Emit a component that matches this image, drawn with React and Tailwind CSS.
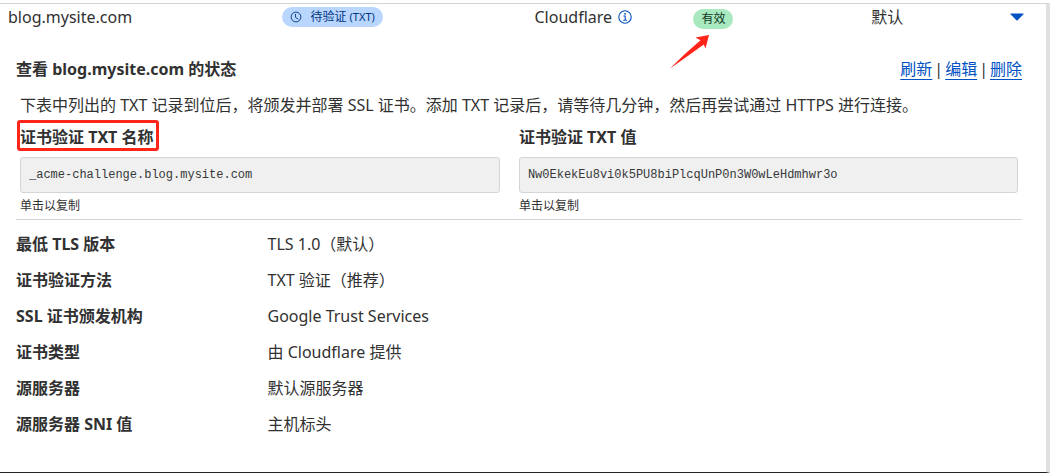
import { useState } from "react";

const details = [
  ["最低 TLS 版本", "TLS 1.0（默认）"],
  ["证书验证方法", "TXT 验证（推荐）"],
  ["SSL 证书颁发机构", "Google Trust Services"],
  ["证书类型", "由 Cloudflare 提供"],
  ["源服务器", "默认源服务器"],
  ["源服务器 SNI 值", "主机标头"],
];

function ClockIcon() {
  return (
    <svg className="size-3" viewBox="0 0 12 12" fill="none" stroke="currentColor" aria-hidden="true">
      <circle cx="6" cy="6" r="4.9" strokeWidth="0.9" />
      <path d="M5.5 3v3.3L8.3 8.2" strokeWidth="0.9" />
    </svg>
  );
}

function InfoIcon() {
  return (
    <svg className="size-[14px]" viewBox="0 0 14 14" fill="none" stroke="currentColor" aria-hidden="true">
      <circle cx="7" cy="7" r="6.2" strokeWidth="1.1" />
      <path d="M5.5 6h1.7v4.2M5.2 10.3h3.8" strokeWidth="1.1" />
      <circle cx="7" cy="3.8" r="0.9" fill="currentColor" stroke="none" />
    </svg>
  );
}

function Arrow() {
  return (
    <svg className="absolute top-[25px] right-[23px] h-9 w-10" viewBox="0 0 40 36" aria-hidden="true">
      <path d="M39 1 25.5 3.5 30.5 6.2 Q14 20 0 34.5 Q18 22 33.8 10.5 L35.5 14.5Z" fill="#ff2519" />
    </svg>
  );
}

function CopyField({ id, label, value, marked }) {
  return (
    <div className="min-w-0">
      <div className="flex h-9 items-center">
        <label htmlFor={id} className="relative font-bold">
          {label}
          {marked && (
            <span className="absolute -top-[5px] -right-[5px] -bottom-[2px] -left-[3px] rounded-[3px] border-[3px] border-[#ff2519]" />
          )}
        </label>
      </div>
      <input
        id={id}
        readOnly
        value={value}
        className="mt-[2px] block h-9 w-full rounded-[3px] border border-[#d5d5d5] bg-[#f0f0f0] px-2 font-['Liberation_Mono',monospace] text-xs text-[#36393a] outline-none"
      />
      <button
        type="button"
        onClick={() => navigator.clipboard?.writeText(value)}
        className="mt-[5px] block text-xs leading-4"
      >
        单击以复制
      </button>
    </div>
  );
}

export default function App() {
  const [open, setOpen] = useState(true);
  return (
    <div className="flex min-h-screen flex-col bg-white pt-[3px] font-['Noto_Sans','Noto_Sans_CJK_SC',sans-serif] text-base leading-6 text-[#313131]">
      <main className="grow border-t border-r-4 border-b border-t-[#d5d5d5] border-r-[#e0e0e0] border-b-[#222]">
        <table className="w-full table-fixed">
          <colgroup>
            <col className="w-[27%]" />
            <col className="w-[24.1%]" />
            <col className="w-[15.2%]" />
            <col className="w-[17%]" />
            <col />
          </colgroup>
          <tbody>
            <tr className="h-[26px]">
              <td className="pl-2">blog.mysite.com</td>
              <td>
                <span className="flex h-5 w-fit items-center gap-2 rounded-full bg-[#b9d6ff] px-2 text-xs text-[#003681]">
                  <ClockIcon />
                  <span className="whitespace-nowrap">
                    待验证 <span className="text-[11px]">(TXT)</span>
                  </span>
                </span>
              </td>
              <td>
                <span className="flex items-center gap-[6px]">
                  Cloudflare
                  <button type="button" aria-label="Cloudflare" className="text-[#0051c3]">
                    <InfoIcon />
                  </button>
                </span>
              </td>
              <td>
                <span className="relative mt-[3px] flex h-5 w-fit items-center rounded-full bg-[#a8e9c0] px-2 text-xs text-[#10351f]">
                  有效
                  <Arrow />
                </span>
              </td>
              <td>
                <span className="flex items-center justify-between pr-[22px]">
                  默认
                  <button type="button" aria-label="展开" aria-expanded={open} onClick={() => setOpen(!open)}>
                    <svg className="h-2 w-[14px] fill-[#0051c3]" viewBox="0 0 14 8" aria-hidden="true">
                      <path d="M1 0.5h12q1 0 0.4 0.8L7.6 7.2q-0.6 0.6-1.2 0L0.6 1.3Q0 0.5 1 0.5Z" />
                    </svg>
                  </button>
                </span>
              </td>
            </tr>
          </tbody>
        </table>

        {open && (
          <section className="pt-[21px] pr-6 pb-7 pl-4">
            <div className="flex h-9 items-center justify-between">
              <h2 className="font-bold">查看 blog.mysite.com 的状态</h2>
              <nav className="flex gap-[2px]">
                <a href="#refresh" className="text-[#0051c3] underline underline-offset-4">刷新</a>|
                <a href="#edit" className="text-[#0051c3] underline underline-offset-4">编辑</a>|
                <a href="#delete" className="text-[#0051c3] underline underline-offset-4">删除</a>
              </nav>
            </div>
            <div className="border-b border-[#d5d5d5] px-1 pb-[5px]">
              <p className="py-[6px]">
                下表中列出的 TXT 记录到位后，将颁发并部署 SSL 证书。添加 TXT 记录后，请等待几分钟，然后再尝试通过 HTTPS 进行连接。
              </p>
              <div className="-mt-1 grid grid-cols-[minmax(0,25fr)_minmax(0,26fr)] gap-x-[19px]">
                <CopyField id="txt-name" label="证书验证 TXT 名称" value="_acme-challenge.blog.mysite.com" marked />
                <CopyField id="txt-value" label="证书验证 TXT 值" value="Nw0EkekEu8vi0k5PU8biPlcqUnP0n3W0wLeHdmhwr3o" />
              </div>
            </div>
            <dl className="grid grid-cols-[1fr_3fr] pt-[6px]">
              {details.map(([name, value]) => (
                <div key={name} className="col-span-2 grid h-9 grid-cols-subgrid items-center">
                  <dt className="font-bold">{name}</dt>
                  <dd>{value}</dd>
                </div>
              ))}
            </dl>
          </section>
        )}
      </main>
    </div>
  );
}
